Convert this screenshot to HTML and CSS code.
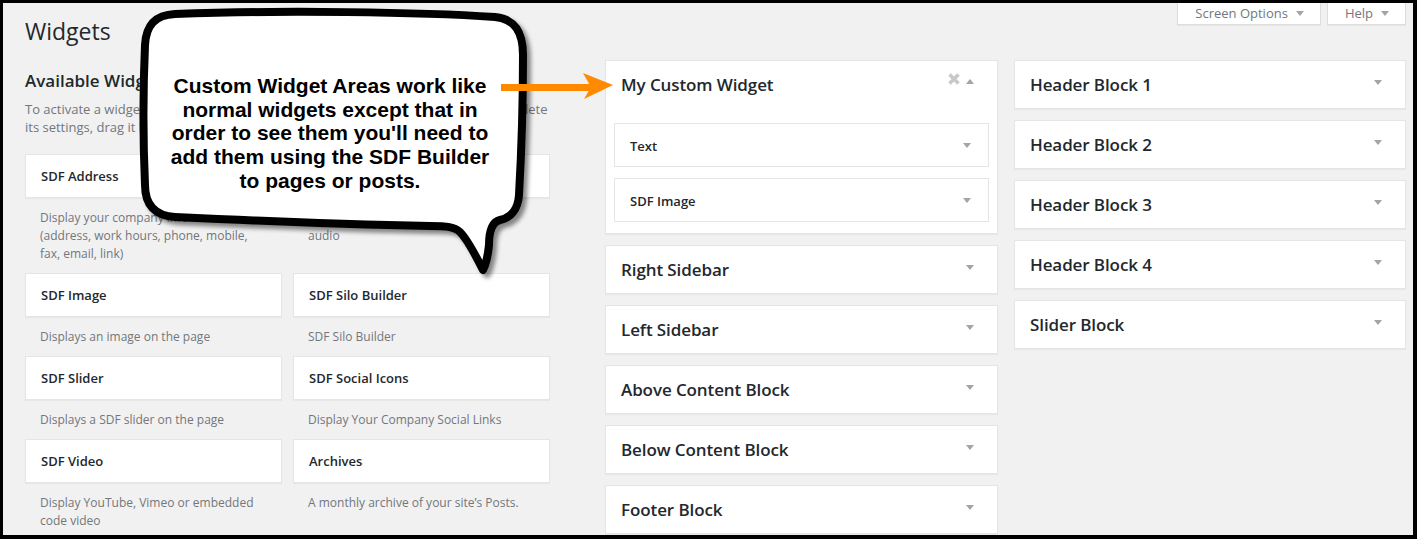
FILE: index.html
```html
<!DOCTYPE html>
<html lang="en">
<head>
    <meta charset="UTF-8">
    <title>Widgets</title>
    <link rel="stylesheet" href="styles.css">
</head>
<body>
    <div id="frame">
        <div class="wrap">
            <div class="page-header">
                <h1>Widgets</h1>
                <div class="screen-meta-links">
                    <button class="meta-link">Screen Options <svg class="caret" width="8" height="5" viewBox="0 0 8 5"><polygon points="0,0 8,0 4,5"/></svg></button>
                    <button class="meta-link">Help <svg class="caret" width="8" height="5" viewBox="0 0 8 5"><polygon points="0,0 8,0 4,5"/></svg></button>
                </div>
            </div>

            <div class="widgets-layout">
                <div class="widgets-left">
                    <h2>Available Widgets</h2>
                    <p class="intro">To activate a widget drag it to a sidebar or click on it. To deactivate a widget and delete<br>its settings, drag it back.</p>
                    <div class="widget-list">
                        <div class="widget-item">
                            <div class="widget-top">SDF Address</div>
                            <p class="widget-desc">Display your company information (address, work hours, phone, mobile, fax, email, link)</p>
                        </div>
                        <div class="widget-item">
                            <div class="widget-top">SDF Audio</div>
                            <p class="widget-desc">Displays SoundCloud or embedded audio</p>
                        </div>
                        <div class="widget-item">
                            <div class="widget-top">SDF Image</div>
                            <p class="widget-desc">Displays an image on the page</p>
                        </div>
                        <div class="widget-item">
                            <div class="widget-top">SDF Silo Builder</div>
                            <p class="widget-desc">SDF Silo Builder</p>
                        </div>
                        <div class="widget-item">
                            <div class="widget-top">SDF Slider</div>
                            <p class="widget-desc">Displays a SDF slider on the page</p>
                        </div>
                        <div class="widget-item">
                            <div class="widget-top">SDF Social Icons</div>
                            <p class="widget-desc">Display Your Company Social Links</p>
                        </div>
                        <div class="widget-item">
                            <div class="widget-top">SDF Video</div>
                            <p class="widget-desc">Display YouTube, Vimeo or embedded code video</p>
                        </div>
                        <div class="widget-item">
                            <div class="widget-top">Archives</div>
                            <p class="widget-desc">A monthly archive of your site’s Posts.</p>
                        </div>
                    </div>
                </div>

                <div class="sidebars-col">
                    <div class="sidebar">
                        <div class="sidebar-name">
                            <h3>My Custom Widget</h3>
                            <div class="sidebar-actions">
                                <svg class="remove" width="12" height="12" viewBox="0 0 12 12"><path d="M1.5 1.5 L10.5 10.5 M10.5 1.5 L1.5 10.5"/></svg>
                                <svg class="toggle" width="8" height="5" viewBox="0 0 8 5"><polygon points="0,5 8,5 4,0"/></svg>
                            </div>
                        </div>
                        <div class="sidebar-body">
                            <div class="inner-widget">
                                <span>Text</span>
                                <svg class="toggle" width="8" height="5" viewBox="0 0 8 5"><polygon points="0,0 8,0 4,5"/></svg>
                            </div>
                            <div class="inner-widget">
                                <span>SDF Image</span>
                                <svg class="toggle" width="8" height="5" viewBox="0 0 8 5"><polygon points="0,0 8,0 4,5"/></svg>
                            </div>
                        </div>
                    </div>
                    <div class="sidebar closed">
                        <div class="sidebar-name"><h3>Right Sidebar</h3><svg class="toggle" width="8" height="5" viewBox="0 0 8 5"><polygon points="0,0 8,0 4,5"/></svg></div>
                    </div>
                    <div class="sidebar closed">
                        <div class="sidebar-name"><h3>Left Sidebar</h3><svg class="toggle" width="8" height="5" viewBox="0 0 8 5"><polygon points="0,0 8,0 4,5"/></svg></div>
                    </div>
                    <div class="sidebar closed">
                        <div class="sidebar-name"><h3>Above Content Block</h3><svg class="toggle" width="8" height="5" viewBox="0 0 8 5"><polygon points="0,0 8,0 4,5"/></svg></div>
                    </div>
                    <div class="sidebar closed">
                        <div class="sidebar-name"><h3>Below Content Block</h3><svg class="toggle" width="8" height="5" viewBox="0 0 8 5"><polygon points="0,0 8,0 4,5"/></svg></div>
                    </div>
                    <div class="sidebar closed">
                        <div class="sidebar-name"><h3>Footer Block</h3><svg class="toggle" width="8" height="5" viewBox="0 0 8 5"><polygon points="0,0 8,0 4,5"/></svg></div>
                    </div>
                </div>

                <div class="sidebars-col right">
                    <div class="sidebar closed">
                        <div class="sidebar-name"><h3>Header Block 1</h3><svg class="toggle" width="8" height="5" viewBox="0 0 8 5"><polygon points="0,0 8,0 4,5"/></svg></div>
                    </div>
                    <div class="sidebar closed">
                        <div class="sidebar-name"><h3>Header Block 2</h3><svg class="toggle" width="8" height="5" viewBox="0 0 8 5"><polygon points="0,0 8,0 4,5"/></svg></div>
                    </div>
                    <div class="sidebar closed">
                        <div class="sidebar-name"><h3>Header Block 3</h3><svg class="toggle" width="8" height="5" viewBox="0 0 8 5"><polygon points="0,0 8,0 4,5"/></svg></div>
                    </div>
                    <div class="sidebar closed">
                        <div class="sidebar-name"><h3>Header Block 4</h3><svg class="toggle" width="8" height="5" viewBox="0 0 8 5"><polygon points="0,0 8,0 4,5"/></svg></div>
                    </div>
                    <div class="sidebar closed">
                        <div class="sidebar-name"><h3>Slider Block</h3><svg class="toggle" width="8" height="5" viewBox="0 0 8 5"><polygon points="0,0 8,0 4,5"/></svg></div>
                    </div>
                </div>
            </div>
        </div>

        <!-- annotation callout drawn over the screenshot -->
        <svg class="bubble" width="420" height="285" viewBox="130 3 420 285">
            <defs>
                <filter id="shadow" x="-10%" y="-10%" width="130%" height="130%">
                    <feDropShadow dx="4" dy="4" stdDeviation="2" flood-color="#000" flood-opacity="0.45"/>
                </filter>
            </defs>
            <path filter="url(#shadow)" d="M 175 14 C 280 10, 420 12, 495 17 C 515 19, 523 32, 523 55 C 523 110, 521 160, 519 195 C 518 210, 510 218, 500 220 C 492 222, 489 232, 489 245 C 488 255, 486 264, 483 270 C 476 256, 468 240, 460 232 C 455 227, 447 226, 430 226 C 330 224, 240 220, 175 217 C 155 216, 145 205, 145 185 C 143 140, 143 90, 145 45 C 146 25, 155 15, 175 14 Z"/>
        </svg>
        <p class="bubble-text">Custom Widget Areas work like normal widgets except that in order to see them you'll need to add them using the SDF Builder to pages or posts.</p>
        <svg class="pointer" width="115" height="30" viewBox="500 72 115 30">
            <rect x="501" y="84" width="90" height="7"/>
            <polygon points="583,73 613,85 584,99 591,87"/>
        </svg>
    </div>
</body>
</html>
```

FILE: styles.css
```css
html, body {
    margin: 0;
    padding: 0;
}
body {
    font-family: "Open Sans", sans-serif;
    color: #23282d;
    background: #000;
}
#frame {
    position: relative;
    width: 1417px;
    height: 539px;
    box-sizing: border-box;
    border-style: solid;
    border-color: #000;
    border-width: 3px 4px 4px 3px;
    background-color: #f1f1f1;
    overflow: hidden;
}
.wrap {
    padding: 0 7px 0 22px;
}
.page-header {
    display: flex;
    justify-content: space-between;
    align-items: flex-start;
    height: 57px;
}
h1 {
    margin: 14px 0 0;
    font-size: 23px;
    font-weight: 400;
    line-height: 29px;
}
.screen-meta-links {
    display: flex;
    gap: 6px;
}
.meta-link {
    display: flex;
    align-items: center;
    gap: 8px;
    height: 22px;
    padding: 0 16px 1px 17px;
    background: #fff;
    border: 1px solid #ddd;
    border-top: none;
    font-family: "Open Sans", sans-serif;
    font-size: 13px;
    color: #72777c;
    box-shadow: 0 1px 1px rgba(0,0,0,0.04);
}
.caret {
    fill: #a0a5aa;
}
.widgets-layout {
    display: flex;
    align-items: flex-start;
}
.widgets-left {
    width: 525px;
    margin-right: 55px;
}
.widgets-left h2 {
    margin: 9px 0 0;
    font-size: 17px;
    font-weight: 600;
    line-height: 24px;
}
.intro {
    margin: 7px 0 0;
    font-size: 13px;
    line-height: 18px;
    color: #72777c;
}
.widget-list {
    margin-top: 18px;
    display: grid;
    grid-template-columns: 257px 257px;
    column-gap: 11px;
}
.widget-top {
    height: 42px;
    line-height: 42px;
    padding: 0 15px;
    background: #fff;
    border: 1px solid #e5e5e5;
    box-shadow: 0 1px 1px rgba(0,0,0,0.04);
    font-size: 13px;
    font-weight: 600;
}
.widget-desc {
    margin: 0;
    padding: 11px 15px 10px;
    font-size: 12px;
    line-height: 18px;
    color: #72777c;
}
.sidebars-col {
    width: 393px;
    margin-right: 16px;
}
.sidebars-col.right {
    width: 392px;
    margin-right: 0;
}
.sidebar {
    background: #fff;
    border: 1px solid #e5e5e5;
    box-shadow: 0 1px 1px rgba(0,0,0,0.04);
    margin-bottom: 11px;
}
.sidebar-name {
    height: 47px;
    padding: 0 23px 0 15px;
    display: flex;
    align-items: center;
    justify-content: space-between;
}
.sidebar-name h3 {
    margin: 0;
    font-size: 17px;
    font-weight: 600;
    letter-spacing: -0.1px;
}
.toggle {
    fill: #a0a5aa;
    margin-bottom: 4px;
}
.sidebar-actions {
    display: flex;
    align-items: center;
    gap: 6px;
    margin-top: -12px;
}
.remove {
    stroke: #c8c8c8;
    stroke-width: 3.5;
}
.sidebar-actions .toggle {
    margin-top: 6px;
    margin-bottom: 0;
}
.sidebar-body {
    padding: 15px 8px 11px;
}
.inner-widget {
    height: 42px;
    padding: 0 17px 0 15px;
    border: 1px solid #e5e5e5;
    display: flex;
    align-items: center;
    justify-content: space-between;
    font-size: 13px;
    font-weight: 600;
}
.inner-widget + .inner-widget {
    margin-top: 11px;
}
.inner-widget span {
    margin-top: 2px;
}
.inner-widget .toggle {
    margin-bottom: 0;
}
.bubble {
    position: absolute;
    left: 127px;
    top: 0;
}
.bubble path {
    fill: #fff;
    stroke: #000;
    stroke-width: 8;
    stroke-linejoin: round;
}
.bubble-text {
    position: absolute;
    left: 159px;
    top: 71px;
    width: 336px;
    margin: 0;
    font-family: "Liberation Sans", Arial, sans-serif;
    font-size: 21px;
    font-weight: bold;
    line-height: 23.7px;
    text-align: center;
    color: #000;
}
.pointer {
    position: absolute;
    left: 497px;
    top: 69px;
    fill: #ff8a00;
}
```
